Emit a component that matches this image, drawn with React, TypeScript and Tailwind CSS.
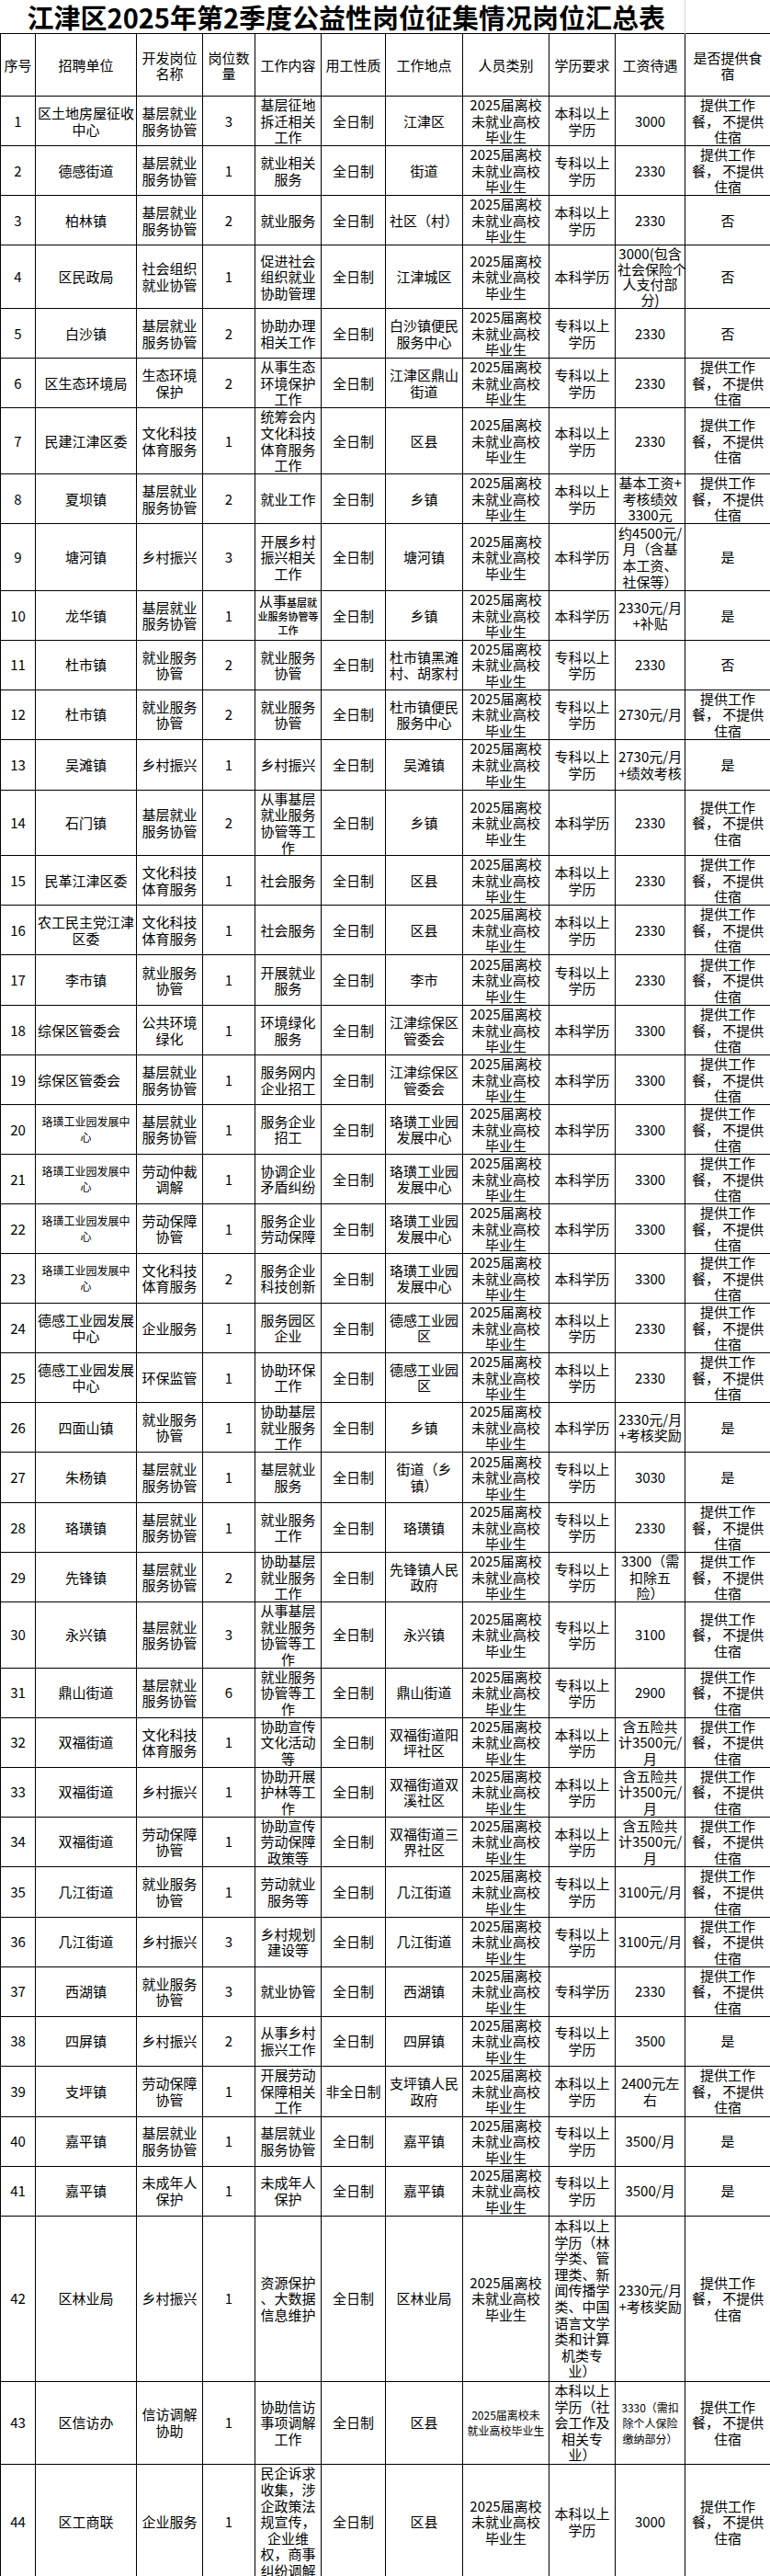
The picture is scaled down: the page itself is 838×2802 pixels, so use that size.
import type { ReactNode } from 'react';

type Spec = string | { t?: string; cls?: string; node?: ReactNode; left?: boolean };
type Row = { h: string; cells: Spec[] };

const STD = '2025届离校|未就业高校|毕业生';
const MEAL = '提供工作|餐，\u00a0不提供|住宿';
const BK = '本科以上|学历';
const ZK = '专科以上|学历';
const JC = '基层就业|服务协管';
const WH = '文化科技|体育服务';
const LH: Spec = { t: '珞璜工业园发展中|心', cls: 'text-[12px] leading-[17px]' };
const LHD = '珞璜工业园|发展中心';

const HEADERS = ['序号', '招聘单位', '开发岗位|名称', '岗位数|量', '工作内容', '用工性质', '工作地点', '人员类别', '学历要求', '工资待遇', '是否提供食|宿'];

const COLS = ['w-[38px]', 'w-[110px]', 'w-[72px]', 'w-[57px]', 'w-[72px]', 'w-[70px]', 'w-[84px]', 'w-[94px]', 'w-[72px]', 'w-[76px]', 'w-[93px]'];

const ROWS: Row[] = [
  { h: 'h-[54px]', cells: ['区土地房屋征收|中心', JC, '3', '基层征地|拆迁相关|工作', '全日制', '江津区', STD, BK, '3000', MEAL] },
  { h: 'h-[54px]', cells: ['德感街道', JC, '1', '就业相关|服务', '全日制', '街道', STD, ZK, '2330', MEAL] },
  { h: 'h-[54px]', cells: ['柏林镇', JC, '2', '就业服务', '全日制', '社区（村）', STD, BK, '2330', '否'] },
  { h: 'h-[69px]', cells: ['区民政局', '社会组织|就业协管', '1', '促进社会|组织就业|协助管理', '全日制', '江津城区', STD, '本科学历', { t: '3000(包含|社会保险个|人支付部|分)', cls: 'leading-[16.5px]' }, '否'] },
  { h: 'h-[54px]', cells: ['白沙镇', JC, '2', '协助办理|相关工作', '全日制', '白沙镇便民|服务中心', STD, ZK, '2330', '否'] },
  { h: 'h-[54px]', cells: ['区生态环境局', '生态环境|保护', '2', '从事生态|环境保护|工作', '全日制', '江津区鼎山|街道', STD, ZK, '2330', MEAL] },
  { h: 'h-[72px]', cells: ['民建江津区委', WH, '1', '统筹会内|文化科技|体育服务|工作', '全日制', '区县', STD, BK, '2330', MEAL] },
  { h: 'h-[54px]', cells: ['夏坝镇', JC, '2', '就业工作', '全日制', '乡镇', STD, BK, '基本工资+|考核绩效|3300元', MEAL] },
  { h: 'h-[73px]', cells: ['塘河镇', '乡村振兴', '3', '开展乡村|振兴相关|工作', '全日制', '塘河镇', STD, '本科学历', '约4500元/|月（含基|本工资、|社保等）', '是'] },
  {
    h: 'h-[53px]',
    cells: [
      '龙华镇', JC, '1',
      {
        node: (
          <div className="leading-[15px]">
            <div className="whitespace-nowrap">
              <span className="text-[15px]">从事</span>
              <span className="text-[11px] font-medium">基层就</span>
            </div>
            <div className="whitespace-nowrap text-[11px] font-medium">业服务协管等</div>
            <div className="whitespace-nowrap text-[11px] font-medium">工作</div>
          </div>
        ),
      },
      '全日制', '乡镇', STD, '本科学历', '2330元/月|+补贴', '是',
    ],
  },
  { h: 'h-[54px]', cells: ['杜市镇', '就业服务|协管', '2', '就业服务|协管', '全日制', '杜市镇黑滩|村、胡家村', STD, ZK, '2330', '否'] },
  { h: 'h-[54px]', cells: ['杜市镇', '就业服务|协管', '2', '就业服务|协管', '全日制', '杜市镇便民|服务中心', STD, ZK, '2730元/月', MEAL] },
  { h: 'h-[55px]', cells: ['吴滩镇', '乡村振兴', '1', '乡村振兴', '全日制', '吴滩镇', STD, ZK, '2730元/月|+绩效考核', '是'] },
  { h: 'h-[71px]', cells: ['石门镇', JC, '2', '从事基层|就业服务|协管等工|作', '全日制', '乡镇', STD, '本科学历', '2330', MEAL] },
  { h: 'h-[54px]', cells: ['民革江津区委', WH, '1', '社会服务', '全日制', '区县', STD, BK, '2330', MEAL] },
  { h: 'h-[54px]', cells: ['农工民主党江津|区委', WH, '1', '社会服务', '全日制', '区县', STD, BK, '2330', MEAL] },
  { h: 'h-[55px]', cells: ['李市镇', '就业服务|协管', '1', '开展就业|服务', '全日制', '李市', STD, ZK, '2330', MEAL] },
  { h: 'h-[54px]', cells: [{ t: '综保区管委会', left: true }, '公共环境|绿化', '1', '环境绿化|服务', '全日制', '江津综保区|管委会', STD, '本科学历', '3300', MEAL] },
  { h: 'h-[53px]', cells: [{ t: '综保区管委会', left: true }, JC, '1', '服务网内|企业招工', '全日制', '江津综保区|管委会', STD, '本科学历', '3300', MEAL] },
  { h: 'h-[54px]', cells: [LH, JC, '1', '服务企业|招工', '全日制', LHD, STD, '本科学历', '3300', MEAL] },
  { h: 'h-[54px]', cells: [LH, '劳动仲裁|调解', '1', '协调企业|矛盾纠纷', '全日制', LHD, STD, '本科学历', '3300', MEAL] },
  { h: 'h-[54px]', cells: [LH, '劳动保障|协管', '1', '服务企业|劳动保障', '全日制', LHD, STD, '本科学历', '3300', MEAL] },
  { h: 'h-[54px]', cells: [LH, WH, '2', '服务企业|科技创新', '全日制', LHD, STD, '本科学历', '3300', MEAL] },
  { h: 'h-[54px]', cells: ['德感工业园发展|中心', '企业服务', '1', '服务园区|企业', '全日制', '德感工业园|区', STD, BK, '2330', MEAL] },
  { h: 'h-[54px]', cells: ['德感工业园发展|中心', '环保监管', '1', '协助环保|工作', '全日制', '德感工业园|区', STD, BK, '2330', MEAL] },
  { h: 'h-[54px]', cells: ['四面山镇', '就业服务|协管', '1', '协助基层|就业服务|工作', '全日制', '乡镇', STD, '本科学历', '2330元/月|+考核奖励', '是'] },
  { h: 'h-[55px]', cells: ['朱杨镇', JC, '1', '基层就业|服务', '全日制', '街道（乡|镇）', STD, ZK, '3030', '是'] },
  { h: 'h-[54px]', cells: ['珞璜镇', JC, '1', '就业服务|工作', '全日制', '珞璜镇', STD, ZK, '2330', MEAL] },
  { h: 'h-[53px]', cells: ['先锋镇', JC, '2', '协助基层|就业服务|工作', '全日制', '先锋镇人民|政府', STD, ZK, '3300（需|扣除五|险）', MEAL] },
  { h: 'h-[72px]', cells: ['永兴镇', JC, '3', '从事基层|就业服务|协管等工|作', '全日制', '永兴镇', STD, ZK, '3100', MEAL] },
  { h: 'h-[54px]', cells: ['鼎山街道', JC, '6', '就业服务|协管等工|作', '全日制', '鼎山街道', STD, ZK, '2900', MEAL] },
  { h: 'h-[54px]', cells: ['双福街道', WH, '1', '协助宣传|文化活动|等', '全日制', '双福街道阳|坪社区', STD, BK, '含五险共|计3500元/|月', MEAL] },
  { h: 'h-[54px]', cells: ['双福街道', '乡村振兴', '1', '协助开展|护林等工|作', '全日制', '双福街道双|溪社区', STD, BK, '含五险共|计3500元/|月', MEAL] },
  { h: 'h-[54px]', cells: ['双福街道', '劳动保障|协管', '1', '协助宣传|劳动保障|政策等', '全日制', '双福街道三|界社区', STD, BK, '含五险共|计3500元/|月', MEAL] },
  { h: 'h-[55px]', cells: ['几江街道', '就业服务|协管', '1', '劳动就业|服务等', '全日制', '几江街道', STD, ZK, '3100元/月', MEAL] },
  { h: 'h-[54px]', cells: ['几江街道', '乡村振兴', '3', '乡村规划|建设等', '全日制', '几江街道', STD, ZK, '3100元/月', MEAL] },
  { h: 'h-[53px]', cells: ['西湖镇', '就业服务|协管', '3', '就业协管', '全日制', '西湖镇', STD, '专科学历', '2330', MEAL] },
  { h: 'h-[54px]', cells: ['四屏镇', '乡村振兴', '2', '从事乡村|振兴工作', '全日制', '四屏镇', STD, ZK, '3500', '是'] },
  { h: 'h-[55px]', cells: ['支坪镇', '劳动保障|协管', '1', '开展劳动|保障相关|工作', '非全日制', '支坪镇人民|政府', STD, BK, '2400元左|右', MEAL] },
  { h: 'h-[54px]', cells: ['嘉平镇', JC, '1', '基层就业|服务协管', '全日制', '嘉平镇', STD, ZK, '3500/月', '是'] },
  { h: 'h-[54px]', cells: ['嘉平镇', '未成年人|保护', '1', '未成年人|保护', '全日制', '嘉平镇', STD, ZK, '3500/月', '是'] },
  { h: 'h-[180px]', cells: ['区林业局', '乡村振兴', '1', '资源保护|、大数据|信息维护', '全日制', '区林业局', STD, '本科以上|学历（林|学类、管|理类、新|闻传播学|类、中国|语言文学|类和计算|机类专|业）', '2330元/月|+考核奖励', MEAL] },
  { h: 'h-[90px]', cells: ['区信访办', '信访调解|协助', '1', '协助信访|事项调解|工作', '全日制', '区县', { t: '2025届离校未|就业高校毕业生', cls: 'text-[12px] leading-[17px]' }, '本科以上|学历（社|会工作及|相关专|业）', { t: '3330（需扣|除个人保险|缴纳部分）', cls: 'text-[12px] leading-[17px]' }, MEAL] },
  { h: 'h-[126px]', cells: ['区工商联', '企业服务', '1', '民企诉求|收集，涉|企政策法|规宣传，|企业维|权，商事|纠纷调解', '全日制', '区县', STD, BK, '3000', MEAL] },
];

function Lines({ text }: { text: string }) {
  return (
    <>
      {text.split('|').map((l, i) => (
        <div key={i} className="whitespace-nowrap">{l}</div>
      ))}
    </>
  );
}

function Cell({ spec }: { spec: Spec }) {
  const s = typeof spec === 'string' ? { t: spec } : spec;
  return (
    <td className={`border border-black px-[2px] py-0 align-middle ${s.left ? 'text-left' : 'text-center'}`}>
      {s.node ?? (
        <div className={s.cls ?? ''}>
          <Lines text={s.t ?? ''} />
        </div>
      )}
    </td>
  );
}

export default function App() {
  return (
    <div className="w-[838px] overflow-hidden bg-white font-['Noto_Sans_CJK_SC','Liberation_Sans',sans-serif] text-black">
      <table className="w-[839px] table-fixed border-collapse text-[15px] leading-[17.6px]">
        <colgroup>
          {COLS.map((c, i) => (
            <col key={i} className={c} />
          ))}
        </colgroup>
        <tbody>
          {/* Title */}
          <tr className="h-[36px]">
            <td colSpan={10} className="border-r border-r-[#d4d4d4] pl-[8px] text-center align-middle text-[29px] font-bold leading-[36px] whitespace-nowrap">
              江津区2025年第2季度公益性岗位征集情况岗位汇总表
            </td>
            <td />
          </tr>

          {/* Header */}
          <tr className="h-[68px]">
            {HEADERS.map((h, i) => (
              <td key={i} className="border border-black px-[2px] text-center align-middle leading-[17px]">
                <Lines text={h} />
              </td>
            ))}
          </tr>

          {ROWS.map((r, i) => (
            <tr key={i} className={r.h}>
              <td className="border border-black text-center align-middle">{i + 1}</td>
              {r.cells.map((c, j) => (
                <Cell key={j} spec={c} />
              ))}
            </tr>
          ))}
        </tbody>
      </table>
    </div>
  );
}
